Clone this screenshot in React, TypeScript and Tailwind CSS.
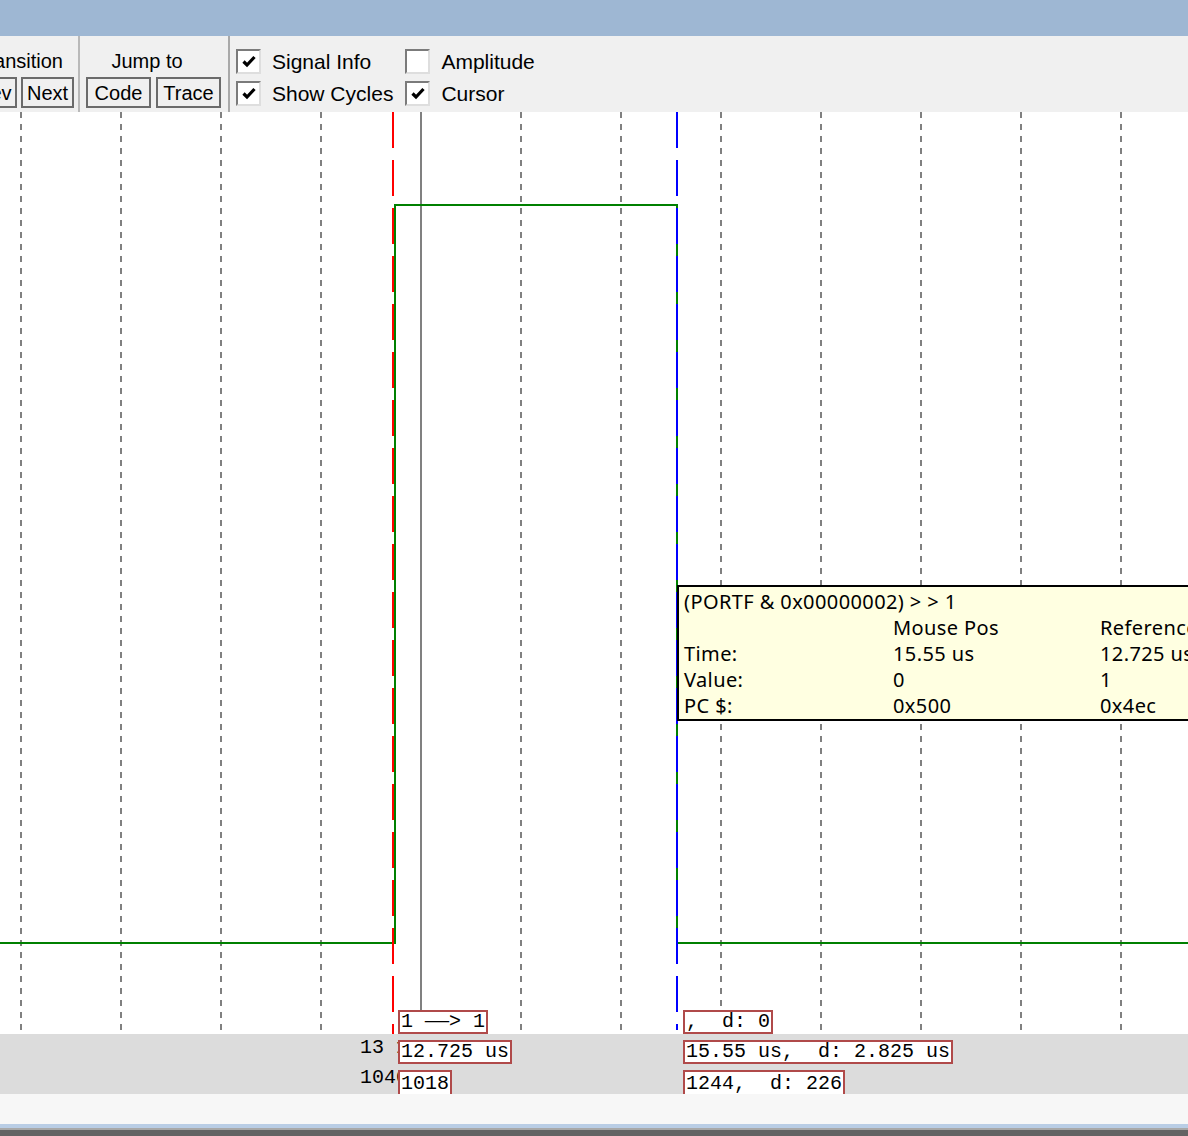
import React from "react";

const ui = { fontFamily: '"Liberation Sans", Arial, sans-serif' };
const tip = { fontFamily: '"Noto Sans", "Open Sans", sans-serif' };
const mono = { fontFamily: '"Liberation Mono", "DejaVu Sans Mono", monospace' };

const gridXs = [21, 121, 221, 321, 521, 621, 721, 821, 921, 1021, 1121];

const ToolButton: React.FC<{ label: string; w: number }> = ({ label, w }) => (
  <div
    className="h-[31px] flex items-center justify-center border-2 border-[#6b6b6b] bg-[#f0f0f0] text-[20px] leading-none text-black shrink-0"
    style={{ width: w }}
  >
    {label}
  </div>
);

const Check: React.FC<{ checked: boolean; label: string }> = ({ checked, label }) => (
  <div className="flex items-center h-[26px]">
    <div className="w-[25px] h-[25px] border-2 border-t-[#7b7b7b] border-l-[#7b7b7b] border-r-[#dedede] border-b-[#dedede] bg-white flex items-center justify-center shrink-0">
      {checked && (
        <svg width="14" height="13" viewBox="0 0 14 13">
          <path d="M1.5 6.5 L5 10 L12.5 2" fill="none" stroke="#000" strokeWidth="3.2" />
        </svg>
      )}
    </div>
    <span className="ml-[11px] text-[21px] leading-none text-black whitespace-nowrap">{label}</span>
  </div>
);

const ValueBox: React.FC<{ left: number; top: number; cut?: boolean; children: React.ReactNode }> = ({
  left,
  top,
  cut,
  children,
}) => (
  <div
    className={`absolute z-10 border-2 border-[#b04a4a] bg-white px-[1px] flex items-center text-[20px] leading-none text-black whitespace-pre ${
      cut ? "border-b-0 h-[25px]" : "h-[24px]"
    }`}
    style={{ ...mono, left, top }}
  >
    {children}
  </div>
);

export default function App() {
  return (
    <div className="w-[1188px] h-[1136px] flex flex-col overflow-hidden bg-white" style={ui}>
      <div className="h-[36px] bg-[#9eb7d3] shrink-0" />

      <div className="h-[76px] bg-[#f0f0f0] flex shrink-0 overflow-hidden">
        <div className="w-[120px] ml-[-42px] flex flex-col shrink-0 pt-[12px]">
          <div className="h-[26px] flex items-center justify-end pr-[15px] text-[20px] leading-none whitespace-nowrap">
            Transition
          </div>
          <div className="mt-[3px] flex justify-end gap-[4px] pr-[4px]">
            <ToolButton label="Prev" w={52} />
            <ToolButton label="Next" w={53} />
          </div>
        </div>
        <div className="w-[2px] bg-[#b9b9b9] shrink-0" />

        <div className="w-[148px] flex flex-col shrink-0 pt-[12px]">
          <div className="h-[26px] flex items-center justify-center text-[20px] leading-none pr-[14px]">
            Jump to
          </div>
          <div className="mt-[3px] flex gap-[5px] pl-[6px]">
            <ToolButton label="Code" w={65} />
            <ToolButton label="Trace" w={65} />
          </div>
        </div>
        <div className="w-[2px] bg-[#a9a9a9] shrink-0" />

        <div className="flex gap-[12px] pl-[6px] pt-[12px]">
          <div className="flex flex-col gap-[6px]">
            <Check checked label="Signal Info" />
            <Check checked label="Show Cycles" />
          </div>
          <div className="flex flex-col gap-[6px]">
            <Check checked={false} label="Amplitude" />
            <Check checked label="Cursor" />
          </div>
        </div>
      </div>

      <div className="relative flex flex-col shrink-0">
        <div className="h-[922px] bg-white relative">
          <svg className="absolute inset-0" width="1188" height="922">
            {gridXs.map((x) => (
              <line key={x} x1={x} y1={0} x2={x} y2={922} stroke="#808080" strokeWidth="2" strokeDasharray="6 6" />
            ))}
            <line x1={421} y1={0} x2={421} y2={922} stroke="#808080" strokeWidth="2" />
            <polyline
              points="0,831 395,831 395,93 677,93 677,831 1188,831"
              fill="none"
              stroke="#008000"
              strokeWidth="2"
            />
            <line x1={393} y1={0} x2={393} y2={922} stroke="#ff0000" strokeWidth="2" strokeDasharray="36 12" />
            <line x1={677} y1={0} x2={677} y2={918} stroke="#0000ff" strokeWidth="2" strokeDasharray="36 12" />
          </svg>

          <div
            className="absolute left-[677px] top-[473px] w-[560px] h-[136px] border-2 border-black bg-[#ffffe1] pl-[5px] pt-[2px] text-[20px] tracking-[0.4px] leading-[26px] text-black"
            style={tip}
          >
            <div className="whitespace-nowrap">(PORTF &amp; 0x00000002) &gt; &gt; 1</div>
            {[
              ["", "Mouse Pos", "Reference"],
              ["Time:", "15.55 us", "12.725 us"],
              ["Value:", "0", "1"],
              ["PC $:", "0x500", "0x4ec"],
            ].map((r, i) => (
              <div key={i} className="flex whitespace-nowrap">
                <div className="w-[209px]">{r[0]}</div>
                <div className="w-[207px]">{r[1]}</div>
                <div>{r[2]}</div>
              </div>
            ))}
          </div>
        </div>

        <div className="h-[60px] bg-[#dcdcdc] relative overflow-hidden">
          <div
            className="absolute left-[360px] top-[2px] w-[38px] overflow-hidden whitespace-pre text-[20px] leading-[24px]"
            style={mono}
          >
            13 1
          </div>
          <div
            className="absolute left-[360px] top-[32px] w-[38px] overflow-hidden whitespace-pre text-[20px] leading-[24px]"
            style={mono}
          >
            1040
          </div>
          <ValueBox left={398} top={6}>12.725 us</ValueBox>
          <ValueBox left={398} top={36} cut>1018</ValueBox>
          <ValueBox left={683} top={6}>15.55 us,  d: 2.825 us</ValueBox>
          <ValueBox left={683} top={36} cut>1244,  d: 226</ValueBox>
        </div>

        <ValueBox left={398} top={898}>
          1 <span className="inline-block w-[24px] text-center scale-x-[2]">—</span>&gt; 1
        </ValueBox>
        <ValueBox left={683} top={898}>,  d: 0</ValueBox>

        <div className="h-[30px] bg-[#f7f7f7]" />
        <div className="h-[4px] bg-[#b9cde5]" />
        <div className="h-[2px] bg-[#a8a8a8]" />
        <div className="h-[6px] bg-[#636363]" />
      </div>
    </div>
  );
}
